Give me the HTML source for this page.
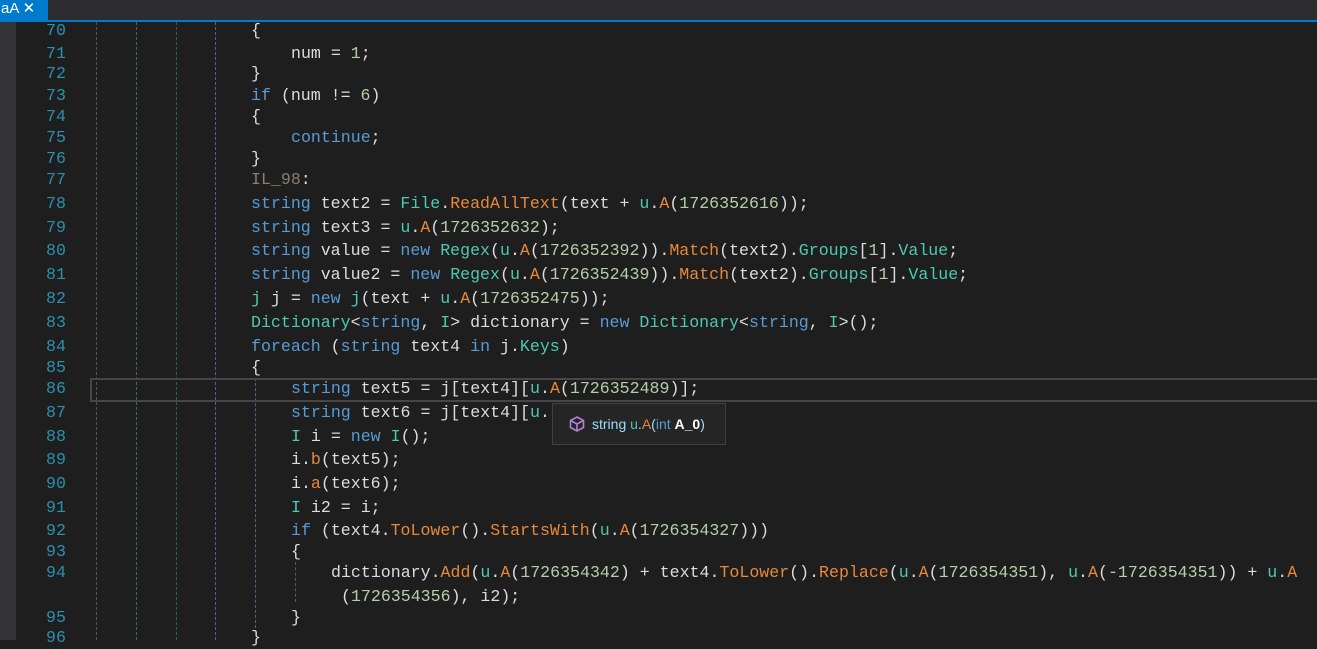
<!DOCTYPE html>
<html><head><meta charset="utf-8"><style>
body{margin:0;width:1317px;height:640px;background:#1e1e1e;overflow:hidden;position:relative;font-family:"Liberation Mono",monospace;font-size:16.6px;color:#dcdcdc}
.top{position:absolute;left:0;top:0;width:1317px;height:20px;background:#2d2d30}
.tab{position:absolute;left:0;top:0;width:47px;height:21px;background:#007acc;color:#fff;font-family:"Liberation Sans",sans-serif;font-size:15px;line-height:18px;padding-left:1px}
.bl{position:absolute;left:0;top:20px;width:1317px;height:2px;background:#007acc}
.mg{position:absolute;left:0;top:22px;width:16px;height:618px;background:#333337}
.l{position:absolute;height:22px;line-height:22px;white-space:pre}
.n{position:absolute;left:46px;width:40px;color:#2b91af;height:22px;line-height:22px}
.g{position:absolute;width:0;border-left:1px dashed}
.k{color:#569cd6}.t{color:#4ec9b0}.m{color:#ff8c00;color:#e8883a}.d{color:#b5cea8}.lb{color:#8a7f6a}
.hl{position:absolute;left:90px;top:378px;width:1227px;height:20px;border:2px solid #464646}
.tip{position:absolute;left:552px;top:403px;width:172px;height:40px;background:#252526;border:1px solid #3f3f46;font-family:"Liberation Sans",sans-serif;font-size:14px;color:#9cdcfe;line-height:40px}
</style></head><body>
<div class="top"></div><div class="tab">aA ✕</div><div class="bl"></div><div class="mg"></div>
<div class="g" style="left:96px;top:22px;height:618px;border-color:#555"></div>
<div class="g" style="left:136px;top:22px;height:618px;border-color:#3e6b55"></div>
<div class="g" style="left:176px;top:22px;height:618px;border-color:#2f5a66"></div>
<div class="g" style="left:215px;top:22px;height:618px;border-color:#7a4e8c"></div>
<div class="g" style="left:255px;top:378px;height:250px;border-color:#7a4e8c"></div>
<div class="g" style="left:295px;top:562px;height:40px;border-color:#3e6b55"></div>
<div class="hl"></div>
<div class="n" style="top:20px">70</div><div class="l" style="left:251px;top:20px">{</div>
<div class="n" style="top:43px">71</div><div class="l" style="left:291px;top:43px">num = <span class="d">1</span>;</div>
<div class="n" style="top:63px">72</div><div class="l" style="left:251px;top:63px">}</div>
<div class="n" style="top:85px">73</div><div class="l" style="left:251px;top:85px"><span class="k">if</span> (num != <span class="d">6</span>)</div>
<div class="n" style="top:106px">74</div><div class="l" style="left:251px;top:106px">{</div>
<div class="n" style="top:127px">75</div><div class="l" style="left:291px;top:127px"><span class="k">continue</span>;</div>
<div class="n" style="top:148px">76</div><div class="l" style="left:251px;top:148px">}</div>
<div class="n" style="top:169px">77</div><div class="l" style="left:251px;top:169px"><span class="lb">IL_98</span>:</div>
<div class="n" style="top:193px">78</div><div class="l" style="left:251px;top:193px"><span class="k">string</span> text2 = <span class="t">File</span>.<span class="m">ReadAllText</span>(text + <span class="t">u</span>.<span class="m">A</span>(<span class="d">1726352616</span>));</div>
<div class="n" style="top:217px">79</div><div class="l" style="left:251px;top:217px"><span class="k">string</span> text3 = <span class="t">u</span>.<span class="m">A</span>(<span class="d">1726352632</span>);</div>
<div class="n" style="top:240px">80</div><div class="l" style="left:251px;top:240px"><span class="k">string</span> value = <span class="k">new</span> <span class="t">Regex</span>(<span class="t">u</span>.<span class="m">A</span>(<span class="d">1726352392</span>)).<span class="m">Match</span>(text2).<span class="t">Groups</span>[<span class="d">1</span>].<span class="t">Value</span>;</div>
<div class="n" style="top:264px">81</div><div class="l" style="left:251px;top:264px"><span class="k">string</span> value2 = <span class="k">new</span> <span class="t">Regex</span>(<span class="t">u</span>.<span class="m">A</span>(<span class="d">1726352439</span>)).<span class="m">Match</span>(text2).<span class="t">Groups</span>[<span class="d">1</span>].<span class="t">Value</span>;</div>
<div class="n" style="top:288px">82</div><div class="l" style="left:251px;top:288px"><span class="t">j</span> j = <span class="k">new</span> <span class="t">j</span>(text + <span class="t">u</span>.<span class="m">A</span>(<span class="d">1726352475</span>));</div>
<div class="n" style="top:312px">83</div><div class="l" style="left:251px;top:312px"><span class="t">Dictionary</span>&lt;<span class="k">string</span>, <span class="t">I</span>&gt; dictionary = <span class="k">new</span> <span class="t">Dictionary</span>&lt;<span class="k">string</span>, <span class="t">I</span>&gt;();</div>
<div class="n" style="top:336px">84</div><div class="l" style="left:251px;top:336px"><span class="k">foreach</span> (<span class="k">string</span> text4 <span class="k">in</span> j.<span class="t">Keys</span>)</div>
<div class="n" style="top:357px">85</div><div class="l" style="left:251px;top:357px">{</div>
<div class="n" style="top:378px">86</div><div class="l" style="left:291px;top:378px"><span class="k">string</span> text5 = j[text4][<span class="t">u</span>.<span class="m">A</span>(<span class="d">1726352489</span>)];</div>
<div class="n" style="top:402px">87</div><div class="l" style="left:291px;top:402px"><span class="k">string</span> text6 = j[text4][<span class="t">u</span>.</div>
<div class="n" style="top:426px">88</div><div class="l" style="left:291px;top:426px"><span class="t">I</span> i = <span class="k">new</span> <span class="t">I</span>();</div>
<div class="n" style="top:449px">89</div><div class="l" style="left:291px;top:449px">i.<span class="m">b</span>(text5);</div>
<div class="n" style="top:473px">90</div><div class="l" style="left:291px;top:473px">i.<span class="m">a</span>(text6);</div>
<div class="n" style="top:497px">91</div><div class="l" style="left:291px;top:497px"><span class="t">I</span> i2 = i;</div>
<div class="n" style="top:520px">92</div><div class="l" style="left:291px;top:520px"><span class="k">if</span> (text4.<span class="m">ToLower</span>().<span class="m">StartsWith</span>(<span class="t">u</span>.<span class="m">A</span>(<span class="d">1726354327</span>)))</div>
<div class="n" style="top:541px">93</div><div class="l" style="left:291px;top:541px">{</div>
<div class="n" style="top:562px">94</div><div class="l" style="left:331px;top:562px">dictionary.<span class="m">Add</span>(<span class="t">u</span>.<span class="m">A</span>(<span class="d">1726354342</span>) + text4.<span class="m">ToLower</span>().<span class="m">Replace</span>(<span class="t">u</span>.<span class="m">A</span>(<span class="d">1726354351</span>), <span class="t">u</span>.<span class="m">A</span>(<span class="d">-1726354351</span>)) + <span class="t">u</span>.<span class="m">A</span></div>
<div class="l" style="left:341px;top:586px">(<span class="d">1726354356</span>), i2);</div>
<div class="n" style="top:607px">95</div><div class="l" style="left:291px;top:607px">}</div>
<div class="n" style="top:627px">96</div><div class="l" style="left:251px;top:627px">}</div>
<div class="tip"><svg style="position:absolute;left:15px;top:11px" width="18" height="18" viewBox="0 0 18 18"><path d="M9 2L15.5 5.5V12.5L9 16L2.5 12.5V5.5Z M2.5 5.5L9 9L15.5 5.5 M9 9V16" fill="none" stroke="#b180d7" stroke-width="1.6"/></svg><span style="position:absolute;left:39px">string <span class="t">u</span>.<span class="m">A</span>(<span class="k">int</span> <b style="color:#fff">A_0</b>)</span></div>
</body></html>
